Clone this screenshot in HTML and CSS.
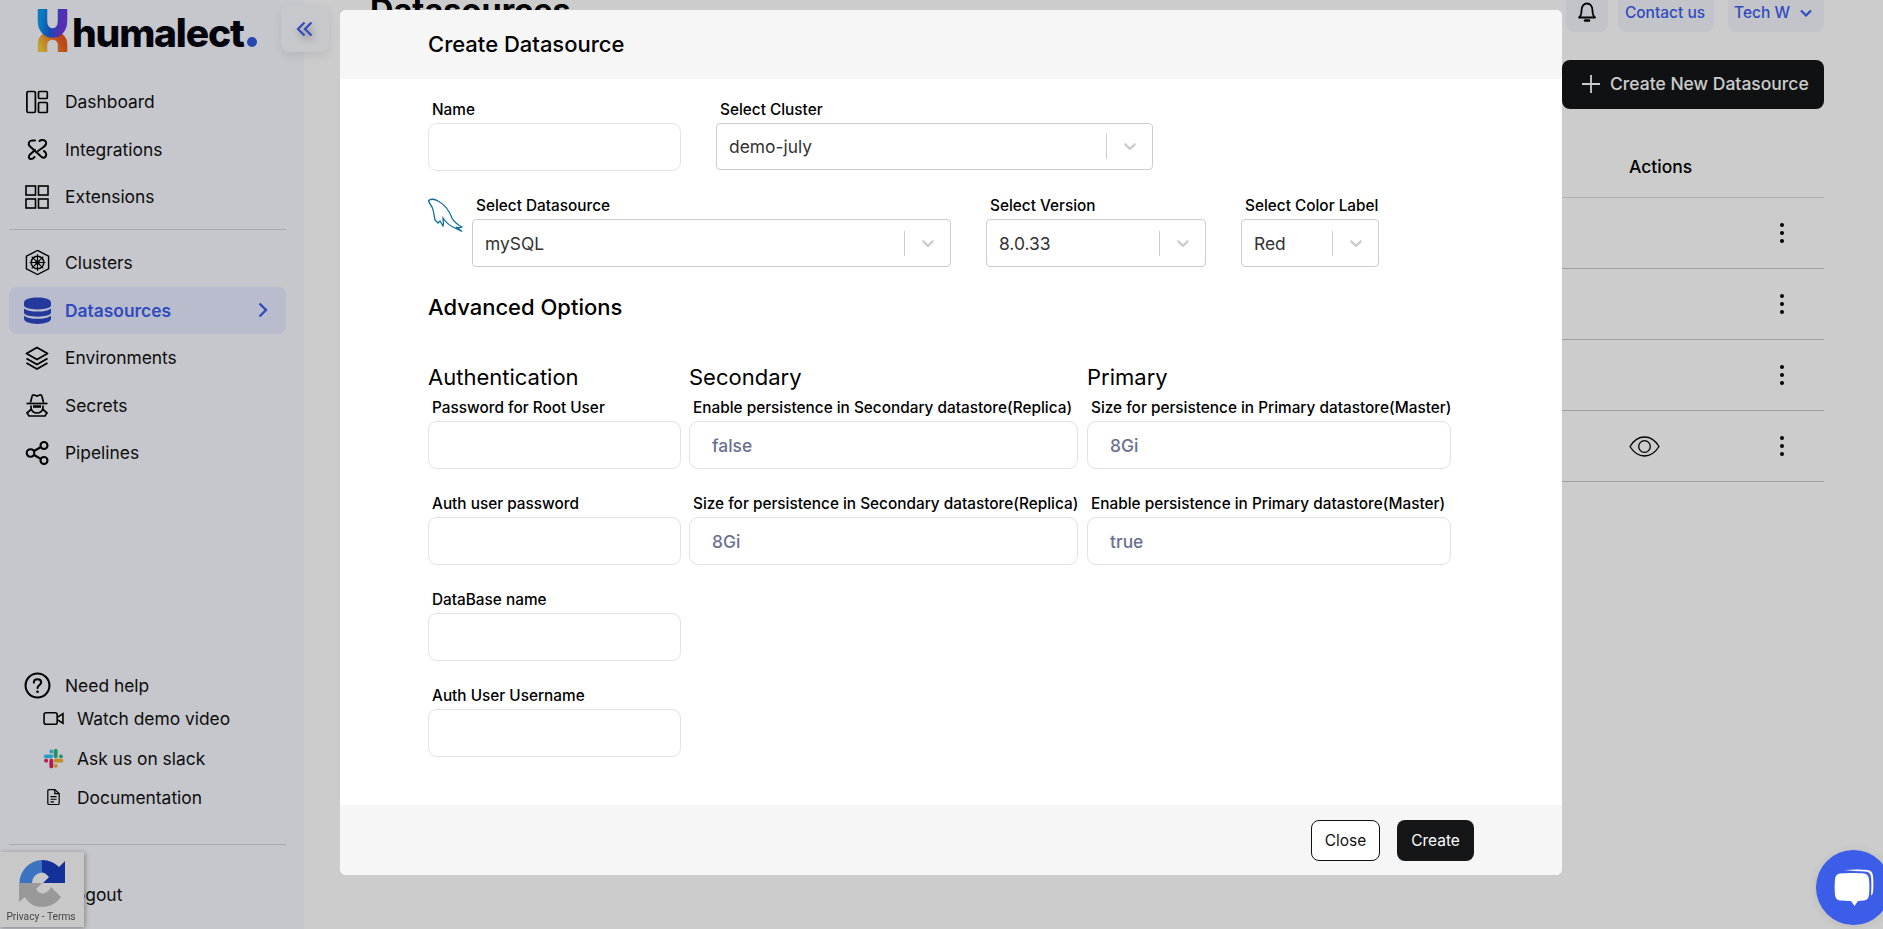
FILE: index.html
```html
<!DOCTYPE html>
<html lang="en">
<head>
    <meta charset="UTF-8">
    <meta name="viewport" content="width=device-width, initial-scale=1.0">
    <title>Datasources</title>
    <link rel="stylesheet" href="styles.css">
</head>
<body>
    <div class="app">
        <aside class="sidebar">
            <div class="logo">
                <svg class="logo-mark" width="32" height="43" viewBox="0 0 32 43" fill="none">
                    <defs>
                        <linearGradient id="logoTop" x1="0" y1="0" x2="1" y2="0.2">
                            <stop offset="0" stop-color="#0a9bf0"/>
                            <stop offset="0.5" stop-color="#1a62dc"/>
                            <stop offset="1" stop-color="#6a3be0"/>
                        </linearGradient>
                        <linearGradient id="logoBottom" x1="0" y1="1" x2="1" y2="0.5">
                            <stop offset="0" stop-color="#f5cc3a"/>
                            <stop offset="1" stop-color="#ec5a20"/>
                        </linearGradient>
                    </defs>
                    <path d="M5.500 43V35C5.500 30 10.500 26 15.500 26S25.500 30 25.500 35V43" stroke="url(#logoBottom)" stroke-width="9.500"/>
                    <path d="M5.500 0V12C5.500 20 10.500 24 15.500 24S25.500 20 25.500 12V0" stroke="url(#logoTop)" stroke-width="9.500"/>
                </svg>
                <span class="logo-text">humalect<i class="logo-dot"></i></span>
            </div>
            <nav class="nav">
                <a class="nav-item">
                    <svg class="nav-icon" viewBox="0 0 24 24" fill="none" stroke="#000" stroke-width="1.700"><rect x="1.900" y="1.500" width="8.500" height="21" rx="1.500"/><rect x="13.500" y="1.500" width="8.800" height="7" rx="1"/><rect x="13.500" y="12.500" width="8.800" height="10" rx="1"/></svg>
                    Dashboard
                </a>
                <a class="nav-item">
                    <svg class="nav-icon" viewBox="0 0 24 24" fill="none" stroke="#000" stroke-width="2" stroke-linecap="round"><path d="M10 3.500H7C4 3.500 2.500 7 4.800 9.200L15 18.500C16.500 20.500 18 21 19.500 20.500S22 17.500 20.500 15.500L19 14"/><path d="M14.500 4C16 2.500 20 2.500 21 5S20 9 18 10.500L13 14"/><path d="M10 13 5 17.500C3 19.500 3.500 22 6 22S9 20.500 9.500 20"/></svg>
                    Integrations
                </a>
                <a class="nav-item">
                    <svg class="nav-icon" viewBox="0 0 24 24" fill="none" stroke="#000" stroke-width="1.600"><rect x="1" y="1" width="9.500" height="9"/><rect x="13.500" y="1" width="9.500" height="9"/><rect x="1" y="14" width="9.500" height="9"/><rect x="13.500" y="14" width="9.500" height="9"/></svg>
                    Extensions
                </a>
                <hr class="nav-line">
                <a class="nav-item">
                    <svg class="nav-icon nav-icon-big" viewBox="0 0 28 28" fill="none" stroke="#000" stroke-width="1.500"><path d="M14 1.500 25.500 7.500V20.500L14 26.500 2.500 20.500V7.500Z"/><circle cx="14" cy="14" r="6.500" stroke-width="1.600"/><circle cx="14" cy="14" r="1.800" stroke-width="1.200"/><path d="M14 5.500V22.500M5.800 14H22.200M8 8l12 12M20 8 8 20" stroke-width="1.200"/></svg>
                    Clusters
                </a>
                <a class="nav-item nav-item-active">
                    <svg class="nav-icon nav-icon-big" viewBox="0 0 26 26" fill="#2c49c4"><path d="M0 5C0 2.500 6 .500 13 .500S26 2.500 26 5V8C26 10.500 20 12 13 12S0 10.500 0 8Z"/><path d="M0 11C2.500 13 7.500 14 13 14S23.500 13 26 11V15C26 17.500 20 19 13 19S0 17.500 0 15Z"/><path d="M0 18C2.500 20 7.500 21 13 21S23.500 20 26 18V21C26 24 20 26 13 26S0 24 0 21Z"/></svg>
                    Datasources
                    <svg class="nav-arrow" width="10" height="16" viewBox="0 0 10 16" fill="none" stroke="#3c5eee" stroke-width="2.400"><path d="M1.500 1.500 8 8 1.500 14.500"/></svg>
                </a>
                <a class="nav-item">
                    <svg class="nav-icon" viewBox="0 0 24 24" fill="none" stroke="#000" stroke-width="1.900" stroke-linejoin="round"><path d="M12 1.500 1.500 7.500 12 13.500 22.500 7.500Z"/><path d="M1.500 12.500 12 18.500 22.500 12.500"/><path d="M1.500 17 12 23 22.500 17"/></svg>
                    Environments
                </a>
                <a class="nav-item">
                    <svg class="nav-icon" viewBox="0 0 24 24" fill="none" stroke="#000" stroke-width="1.700"><path d="M5.500 9.500 7 3.500C7.300 2 8.500 1.500 10 2.200L12 3 14 2.200C15.500 1.500 16.700 2 17 3.500L18.500 9.500"/><path d="M1.500 10.500H22.500"/><path d="M6 12.500V14C6 18 9 20 12 20S18 18 18 14V12.500"/><path d="M8 13.500H16" stroke-width="2.600"/><path d="M6.500 16 2 20 4 23H20L22 20 17.500 16"/></svg>
                    Secrets
                </a>
                <a class="nav-item">
                    <svg class="nav-icon" viewBox="0 0 24 24" fill="none" stroke="#000" stroke-width="2.100"><circle cx="5.500" cy="12" r="3.800"/><circle cx="19" cy="4.500" r="3.500"/><circle cx="19" cy="19.500" r="3.500"/><path d="M9 10 16 6M9 14l7 4"/></svg>
                    Pipelines
                </a>
            </nav>
            <div class="help">
                <a class="nav-item help-title">
                    <svg class="nav-icon nav-icon-big" viewBox="0 0 26 26" fill="none" stroke="#000" stroke-width="2"><circle cx="13" cy="13" r="11.500"/><path d="M9.500 10.200C9.500 8 11 7 13 7S16.500 8.200 16.500 10C16.500 12.500 13 12.500 13 15.500" stroke-linecap="round"/><circle cx="13" cy="19" r="1.300" fill="#000" stroke="none"/></svg>
                    Need help
                </a>
                <a class="help-item">
                    <svg class="help-icon" viewBox="0 0 20 16" fill="none" stroke="#000" stroke-width="1.500"><rect x="1" y="2.500" width="12.500" height="11" rx="2"/><path d="M13.500 7 19 3.500V12.500L13.500 9"/></svg>
                    Watch demo video
                </a>
                <a class="help-item">
                    <svg class="help-icon" viewBox="0 0 24 24" fill="none" stroke-width="4.400" stroke-linecap="round"><path d="M3 9.500H9.500M9.500 4H9.600" stroke="#36c5f0"/><path d="M14.500 3V9.500M20.500 9.500H20.600" stroke="#2eb67d"/><path d="M14.500 14.500H21M14.500 20.500H14.600" stroke="#ecb22e"/><path d="M9.500 14.500V21M3.500 14.500H3.600" stroke="#e01e5a"/></svg>
                    Ask us on slack
                </a>
                <a class="help-item">
                    <svg class="help-icon" viewBox="-1.500 -1.500 24 24" fill="none" stroke="#000" stroke-width="1.400"><path d="M4 3C4 2 4.500 1.500 5.500 1.500H12L17 6V17C17 18 16.500 18.500 15.500 18.500H5.500C4.500 18.500 4 18 4 17Z"/><path d="M12 1.500V6H17M7 9.500H14M7 12.500H14M7 15.500H11"/></svg>
                    Documentation
                </a>
            </div>
            <hr class="nav-line nav-line-bottom">
            <a class="nav-item">
                <svg class="nav-icon" viewBox="0 0 24 24" fill="none" stroke="#000" stroke-width="1.800"><path d="M14 3H4V21H14M10 12H22M18 8l4 4-4 4"/></svg>
                Logout
            </a>
        </aside>
        <button class="collapse-btn" type="button">
            <svg width="18" height="16" viewBox="0 0 18 16" fill="none" stroke="#3c5eee" stroke-width="2.200"><path d="M8.500 1.500 2 8l6.500 6.500M15.500 1.500 9 8l6.500 6.500"/></svg>
        </button>

        <main class="main">
            <header class="topbar">
                <h1 class="page-title">Datasources</h1>
                <div class="top-actions">
                    <span class="pill pill-bell">
                        <svg width="18" height="20" viewBox="0 0 18 20" fill="none" stroke="#000" stroke-width="1.800"><path d="M1 15.500C3 14 3.500 12 3.500 8.500 3.500 4 6 1.500 9 1.500S14.500 4 14.500 8.500C14.500 12 15 14 17 15.500Z" stroke-linejoin="round"/><path d="M7 18.500H11" stroke-width="2.400" stroke-linecap="round"/></svg>
                    </span>
                    <span class="pill pill-contact">Contact us</span>
                    <span class="pill pill-user">Tech W
                        <svg width="12" height="8" viewBox="0 0 12 8" fill="none" stroke="#3c5eee" stroke-width="2.200"><path d="M1 1.500 6 6.500 11 1.500"/></svg>
                    </span>
                </div>
            </header>
            <div class="main-actions">
                <button class="btn-new" type="button">
                    <svg width="18" height="18" viewBox="0 0 18 18" stroke="#fff" stroke-width="1.800"><path d="M9 0V18M0 9H18"/></svg>
                    Create New Datasource
                </button>
            </div>
            <div class="table">
                <div class="table-head">
                    <div class="cell-actions">Actions</div>
                    <div class="cell-menu"></div>
                </div>
                <div class="table-row">
                    <div class="cell-actions"></div>
                    <div class="cell-menu"><i class="kebab"></i></div>
                </div>
                <div class="table-row">
                    <div class="cell-actions"></div>
                    <div class="cell-menu"><i class="kebab"></i></div>
                </div>
                <div class="table-row">
                    <div class="cell-actions"></div>
                    <div class="cell-menu"><i class="kebab"></i></div>
                </div>
                <div class="table-row">
                    <div class="cell-actions">
                        <svg width="31" height="21" viewBox="0 0 31 21" fill="none" stroke="#000" stroke-width="1.300"><path d="M1 10.500C5 4 10 1 15.500 1S26 4 30 10.500C26 17 21 20 15.500 20S5 17 1 10.500Z"/><circle cx="15.500" cy="10.500" r="5.800"/></svg>
                    </div>
                    <div class="cell-menu"><i class="kebab"></i></div>
                </div>
            </div>
        </main>
    </div>

    <div class="recaptcha">
        <svg width="47" height="47" viewBox="0 0 47 47" fill="none">
            <path d="M0 23H23L17 29C19 32 21 33.500 23.500 33.500 27 33.500 30 31 32 27L42 37C38 43 31 47 23 47 16 47 10 44 6 37L0 42Z" fill="#c0c0c0"/>
            <path d="M23 0A23 23 0 0 0 .500 23H13A10.500 10.500 0 0 1 23 12.500Z" fill="#4a90f0"/>
            <path d="M23 0C30 0 36 3 40 7L46 1V23H24L30 17C28 15 26 12.500 23 12.500Z" fill="#1a3ec0"/>
        </svg>
        <span class="recaptcha-links">Privacy - Terms</span>
    </div>

    <div class="backdrop"></div>

    <section class="modal">
        <div class="modal-head">
            <h2 class="modal-title">Create Datasource</h2>
        </div>
        <div class="modal-body">
            <div class="form-row">
                <div class="field field-name">
                    <label>Name</label>
                    <input class="text-input" type="text">
                </div>
                <div class="field field-cluster">
                    <label>Select Cluster</label>
                    <div class="select select-short">
                        <span class="select-value">demo-july</span>
                        <span class="select-sep"></span>
                        <span class="select-arrow"><svg width="20" height="20" viewBox="0 0 20 20" fill="#ccc"><path d="M4.516 7.548c0.436-0.446 1.043-0.481 1.576 0l3.908 3.747 3.908-3.747c0.533-0.481 1.141-0.446 1.574 0 0.436 0.445 0.408 1.197 0 1.615-0.406 0.418-4.695 4.502-4.695 4.502-0.217 0.223-0.502 0.335-0.787 0.335s-0.57-0.112-0.789-0.335c0 0-4.287-4.084-4.695-4.502s-0.436-1.17 0-1.615z"/></svg></span>
                    </div>
                </div>
            </div>
            <div class="form-row form-row-source">
                <svg class="dolphin" width="36" height="36" viewBox="0 0 36 36" fill="none" stroke="#0f6f99" stroke-width="1.300"><path d="M0.500 2.500C3 1 7 1 10 3 16 6 21 12 24 20 26 24 30 27 34 29 32 30 30 30 28 29L34 33.500 27 30C22 28 17 23 15 20 15 23 16 26 15 28L12 23 10 25 7 22C6 18 6 13 4 9 2.500 7 1 5 0.500 2.500Z"/></svg>
                <div class="field field-source">
                    <label>Select Datasource</label>
                    <div class="select">
                        <span class="select-value">mySQL</span>
                        <span class="select-sep"></span>
                        <span class="select-arrow"><svg width="20" height="20" viewBox="0 0 20 20" fill="#ccc"><path d="M4.516 7.548c0.436-0.446 1.043-0.481 1.576 0l3.908 3.747 3.908-3.747c0.533-0.481 1.141-0.446 1.574 0 0.436 0.445 0.408 1.197 0 1.615-0.406 0.418-4.695 4.502-4.695 4.502-0.217 0.223-0.502 0.335-0.787 0.335s-0.57-0.112-0.789-0.335c0 0-4.287-4.084-4.695-4.502s-0.436-1.17 0-1.615z"/></svg></span>
                    </div>
                </div>
                <div class="field field-version">
                    <label>Select Version</label>
                    <div class="select">
                        <span class="select-value">8.0.33</span>
                        <span class="select-sep"></span>
                        <span class="select-arrow"><svg width="20" height="20" viewBox="0 0 20 20" fill="#ccc"><path d="M4.516 7.548c0.436-0.446 1.043-0.481 1.576 0l3.908 3.747 3.908-3.747c0.533-0.481 1.141-0.446 1.574 0 0.436 0.445 0.408 1.197 0 1.615-0.406 0.418-4.695 4.502-4.695 4.502-0.217 0.223-0.502 0.335-0.787 0.335s-0.57-0.112-0.789-0.335c0 0-4.287-4.084-4.695-4.502s-0.436-1.17 0-1.615z"/></svg></span>
                    </div>
                </div>
                <div class="field field-color">
                    <label>Select Color Label</label>
                    <div class="select">
                        <span class="select-value">Red</span>
                        <span class="select-sep"></span>
                        <span class="select-arrow"><svg width="20" height="20" viewBox="0 0 20 20" fill="#ccc"><path d="M4.516 7.548c0.436-0.446 1.043-0.481 1.576 0l3.908 3.747 3.908-3.747c0.533-0.481 1.141-0.446 1.574 0 0.436 0.445 0.408 1.197 0 1.615-0.406 0.418-4.695 4.502-4.695 4.502-0.217 0.223-0.502 0.335-0.787 0.335s-0.57-0.112-0.789-0.335c0 0-4.287-4.084-4.695-4.502s-0.436-1.17 0-1.615z"/></svg></span>
                    </div>
                </div>
            </div>
            <h3 class="advanced-title">Advanced Options</h3>
            <div class="advanced">
                <div class="adv-col adv-auth">
                    <h4 class="adv-title">Authentication</h4>
                    <div class="field adv-field">
                        <label>Password for Root User</label>
                        <input class="text-input" type="text">
                    </div>
                    <div class="field adv-field">
                        <label>Auth user password</label>
                        <input class="text-input" type="text">
                    </div>
                    <div class="field adv-field">
                        <label>DataBase name</label>
                        <input class="text-input" type="text">
                    </div>
                    <div class="field adv-field">
                        <label>Auth User Username</label>
                        <input class="text-input" type="text">
                    </div>
                </div>
                <div class="adv-col adv-secondary">
                    <h4 class="adv-title">Secondary</h4>
                    <div class="field adv-field">
                        <label>Enable persistence in Secondary datastore(Replica)</label>
                        <input class="text-input text-input-filled" type="text" value="false">
                    </div>
                    <div class="field adv-field">
                        <label>Size for persistence in Secondary datastore(Replica)</label>
                        <input class="text-input text-input-filled" type="text" value="8Gi">
                    </div>
                </div>
                <div class="adv-col adv-primary">
                    <h4 class="adv-title">Primary</h4>
                    <div class="field adv-field">
                        <label>Size for persistence in Primary datastore(Master)</label>
                        <input class="text-input text-input-filled" type="text" value="8Gi">
                    </div>
                    <div class="field adv-field">
                        <label>Enable persistence in Primary datastore(Master)</label>
                        <input class="text-input text-input-filled" type="text" value="true">
                    </div>
                </div>
            </div>
        </div>
        <div class="modal-foot">
            <button class="btn btn-close" type="button">Close</button>
            <button class="btn btn-create" type="button">Create</button>
        </div>
    </section>

    <div class="chat-bubble">
        <svg width="40" height="38" viewBox="0 0 40 38" fill="#fff"><path d="M10 1C18 .300 28 .300 33 1 37 1.500 38.500 3 39 7 39.500 12 39.500 18 39 23 38.800 25 38 26 37 26.500 37.500 20 37.500 12 37 8 36.500 4.500 35 3 31 2.500 25 2 16 2 10 1Z"/><path d="M6 4.500C13 3.800 25 3.800 30 4.500 33 5 34.500 6.500 35 10 35.500 15 35.500 21 35 26 34.500 29.500 33 31 30 31.500 28 31.800 26 32 24 32L20.500 37 17 32C13 32 9 31.800 6 31.500 3 31 1.500 29.500 1 26 .500 21 .500 15 1 10 1.500 6.500 3 5 6 4.500Z"/></svg>
    </div>
</body>
</html>
```

FILE: styles.css
```css
html, body {
    margin: 0;
    padding: 0;
    height: 100%;
    overflow: hidden;
}
body {
    font-family: Inter, "Noto Sans", sans-serif;
    color: #000;
    background: #fff;
}
.app {
    display: flex;
    height: 929px;
}

/* sidebar */
.sidebar {
    width: 304px;
    flex-shrink: 0;
    box-sizing: border-box;
    background: #f7f9ff;
    display: flex;
    flex-direction: column;
    padding: 0 18px 11px 9px;
}
.logo {
    height: 78px;
    display: flex;
    align-items: flex-start;
    gap: 3px;
    padding: 9px 0 0 28px;
    box-sizing: border-box;
}
.logo-text {
    font-size: 39px;
    font-weight: 800;
    letter-spacing: -1.200px;
    line-height: 46px;
    margin-top: 1px;
    color: #05060f;
}
.logo-dot {
    display: inline-block;
    width: 10px;
    height: 10px;
    border-radius: 50%;
    background: #2f5be0;
    margin-left: 3px;
}
.nav {
    display: flex;
    flex-direction: column;
}
.nav-item {
    height: 47.500px;
    display: flex;
    align-items: center;
    gap: 16px;
    font-size: 17.400px;
    border-radius: 8px;
    padding-left: 16px;
    color: #111;
}
.nav-icon {
    width: 24px;
    height: 24px;
    flex-shrink: 0;
}
.nav-icon-big {
    width: 27px;
    height: 27px;
    margin-left: -1.500px;
    margin-right: -1.500px;
}
.nav-item-active {
    background: #e7ebff;
    color: #3c5eee;
    font-weight: 600;
}
.nav-arrow {
    margin-left: auto;
    margin-right: 18px;
}
.nav-line {
    border: 0;
    border-top: 1px solid #d4d4da;
    margin: 8px 0 9.500px;
    width: 100%;
}
.nav-line-bottom {
    margin: 26px 0 26px;
}
.help {
    margin-top: auto;
    display: flex;
    flex-direction: column;
}
.help-title {
    height: 28px;
}
.help-item {
    height: 39.500px;
    display: flex;
    align-items: center;
    gap: 13px;
    padding-left: 34px;
    font-size: 17.400px;
    color: #111;
}
.help-icon {
    width: 21px;
    height: 21px;
}
.collapse-btn {
    position: absolute;
    left: 281px;
    top: 5px;
    width: 48px;
    height: 47px;
    border: 0;
    border-radius: 8px;
    background: #f9fafe;
    display: flex;
    align-items: center;
    justify-content: center;
    box-shadow: 0 4px 10px rgba(0, 0, 0, 0.08);
}
.collapse-btn svg {
    filter: drop-shadow(2px 4px 3px rgba(0, 0, 0, 0.3));
}

/* page behind the modal */
.main {
    flex: 1;
    min-width: 0;
    padding: 0 59px 0 66px;
}
.topbar {
    display: flex;
    justify-content: space-between;
    height: 48px;
    margin-top: -16px;
}
.page-title {
    margin: 5px 0 0;
    font-size: 32.500px;
    font-weight: 700;
    line-height: 44px;
}
.top-actions {
    display: flex;
    gap: 10px;
}
.pill {
    height: 48px;
    border-radius: 8px;
    background: #f4f5fc;
    color: #3c5eee;
    font-size: 15.500px;
    font-weight: 500;
    display: flex;
    align-items: flex-end;
    justify-content: center;
    box-sizing: border-box;
    padding-bottom: 10px;
    gap: 10px;
}
.pill-bell {
    width: 42px;
}
.pill-contact {
    width: 96px;
    padding-right: 2px;
}
.pill-user {
    width: 96px;
    margin-left: 4px;
    padding-right: 6px;
}
.pill-user svg {
    margin-bottom: 5px;
}
.main-actions {
    display: flex;
    justify-content: flex-end;
    margin-top: 28px;
}
.btn-new {
    width: 262px;
    height: 49px;
    border: 0;
    border-radius: 8px;
    background: #141618;
    color: #fff;
    font-family: inherit;
    font-size: 17.500px;
    font-weight: 500;
    display: flex;
    align-items: center;
    gap: 10px;
    padding: 0 0 2px 20px;
}
.table {
    margin-top: 26px;
}
.table-head {
    height: 62px;
    display: flex;
    justify-content: flex-end;
    align-items: center;
    border-bottom: 1px solid #dcdce0;
    font-size: 17.500px;
    font-weight: 500;
}
.table-row {
    height: 70px;
    display: flex;
    justify-content: flex-end;
    align-items: center;
    border-bottom: 1px solid #c8c8ce;
}
.cell-actions {
    width: 111px;
    padding-left: 29px;
    display: flex;
    align-items: center;
}
.cell-menu {
    width: 84px;
    display: flex;
    justify-content: center;
}
.kebab,
.kebab::before,
.kebab::after {
    display: block;
    width: 4px;
    height: 4px;
    border-radius: 50%;
    background: #000;
}
.kebab {
    position: relative;
}
.kebab::before,
.kebab::after {
    content: "";
    position: absolute;
    left: 0;
}
.kebab::before {
    top: -8px;
}
.kebab::after {
    top: 8px;
}

/* recaptcha and chat */
.recaptcha {
    position: fixed;
    left: 0;
    bottom: 2px;
    width: 84px;
    height: 75px;
    background: #fbfbfb;
    box-shadow: 1px 1px 5px rgba(0, 0, 0, 0.35);
    display: flex;
    flex-direction: column;
    align-items: center;
    padding-top: 8px;
    box-sizing: border-box;
    overflow: hidden;
}
.recaptcha-links {
    font-family: Roboto, sans-serif;
    font-size: 10.200px;
    color: #555;
    margin: 4px 2px 0 0;
    white-space: nowrap;
}
.backdrop {
    position: fixed;
    inset: 0;
    background: rgba(0, 0, 0, 0.2);
}
.chat-bubble {
    position: fixed;
    left: 1816px;
    top: 850px;
    width: 75px;
    height: 75px;
    border-radius: 50%;
    background: #3b5de7;
    box-shadow: 0 1px 12px rgba(0, 0, 0, 0.1);
    display: flex;
    align-items: center;
    justify-content: center;
}

/* modal */
.modal {
    position: fixed;
    left: 340px;
    top: 10px;
    width: 1222px;
    height: 865px;
    background: #fff;
    border-radius: 6px;
    overflow: hidden;
    display: flex;
    flex-direction: column;
}
.modal-head {
    height: 69px;
    flex-shrink: 0;
    background: #f6f6f6;
    display: flex;
    align-items: center;
    padding: 0 0 1px 88px;
    box-sizing: border-box;
}
.modal-title {
    margin: 0;
    font-size: 22px;
    font-weight: 500;
}
.modal-body {
    flex: 1;
    padding: 21px 0 0 88px;
}
.form-row {
    display: flex;
    align-items: flex-start;
    margin-bottom: 25px;
}
.form-row-source {
    margin-bottom: 0;
}
.field label {
    display: block;
    font-size: 15.350px;
    font-weight: 500;
    line-height: 17px;
    margin: 1px 0 5px 4px;
    white-space: nowrap;
}
.text-input {
    display: block;
    width: 100%;
    height: 48px;
    box-sizing: border-box;
    border: 1px solid #e2e2e8;
    border-radius: 9px;
    background: #fff;
    font-family: inherit;
    font-size: 17.400px;
    padding: 0 22px;
}
.text-input-filled {
    color: #6b7090;
    font-weight: 500;
}
.select {
    height: 48px;
    box-sizing: border-box;
    border: 1px solid #ccc;
    border-radius: 4px;
    display: flex;
    align-items: center;
    padding-left: 12px;
    font-size: 17.400px;
    color: #333;
}
.select-short {
    height: 47px;
    padding-bottom: 1px;
}
.select-value {
    flex: 1;
}
.select-sep {
    width: 1px;
    height: 25px;
    background: #ccc;
}
.select-arrow {
    width: 45px;
    display: flex;
    justify-content: center;
}
.field-name {
    width: 253px;
    margin-right: 35px;
}
.field-cluster {
    width: 437px;
}
.dolphin {
    margin-top: 2px;
    flex-shrink: 0;
    margin-right: 8px;
}
.field-source {
    width: 479px;
    margin-right: 35px;
}
.field-version {
    width: 220px;
    margin-right: 35px;
}
.field-color {
    width: 138px;
}
.advanced-title {
    margin: 26px 0 0;
    font-size: 22px;
    font-weight: 500;
    line-height: 28px;
}
.advanced {
    display: flex;
    margin-top: 44px;
}
.adv-title {
    margin: 0 0 10px;
    font-size: 22px;
    font-weight: 400;
    line-height: 24px;
}
.adv-auth {
    width: 253px;
    margin-right: 8px;
}
.adv-secondary {
    width: 389px;
    margin-right: 9px;
}
.adv-primary {
    width: 364px;
}
.adv-field {
    margin-bottom: 26px;
}
.modal-foot {
    height: 70px;
    flex-shrink: 0;
    background: #f6f6f6;
    display: flex;
    justify-content: flex-end;
    align-items: center;
    gap: 17px;
    padding-right: 88px;
}
.btn {
    height: 41px;
    border-radius: 8px;
    font-family: inherit;
    font-size: 15.500px;
    box-sizing: border-box;
}
.btn-close {
    width: 69px;
    background: #fff;
    border: 1px solid #111;
    color: #111;
}
.btn-create {
    width: 77px;
    background: #141618;
    border: 0;
    color: #fff;
}
```
